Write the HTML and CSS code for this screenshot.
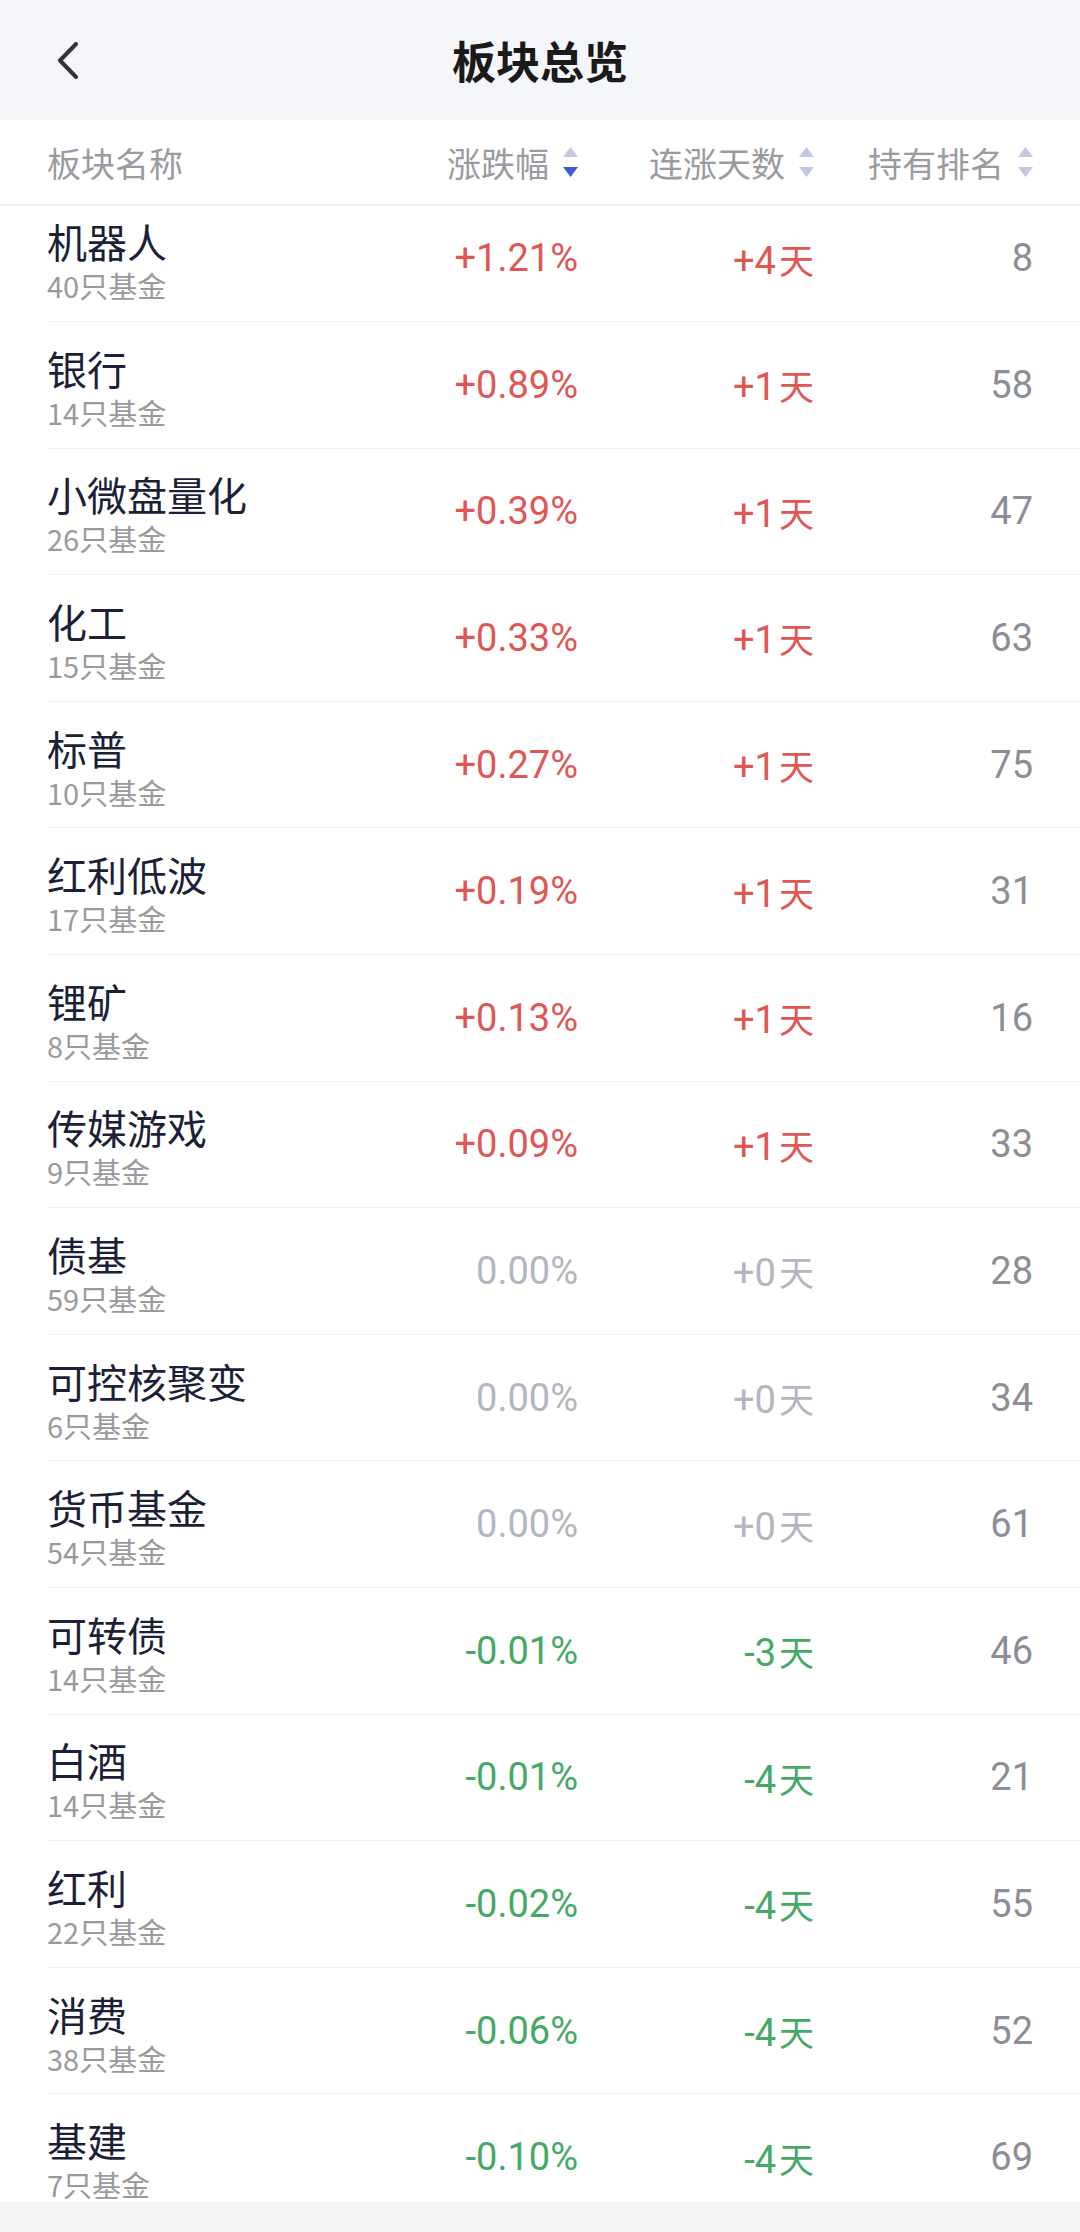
FILE: index.html
```html
<!DOCTYPE html>
<html lang="zh-CN">
<head>
  <meta charset="UTF-8" />
  <meta name="viewport" content="width=device-width, initial-scale=1.0">
  <title>板块总览</title>
<link rel="stylesheet" href="styles.css">
</head>
<body>
  <div class="page">
    <header class="topbar">
      <a class="back" href="#">
        <svg width="22" height="37" viewBox="0 0 22 37"><path d="M19 2 L3 18.5 L19 35" fill="none" stroke="#333" stroke-width="4" stroke-linecap="round" stroke-linejoin="round"/></svg>
      </a>
      <h1>板块总览</h1>
      <span></span>
    </header>

    <div class="colhead">
      <span class="col-name">板块名称</span>
      <span class="sort">涨跌幅
        <svg width="15" height="30" viewBox="0 0 15 30"><path d="M7.5 0 L15 10 L0 10 Z" fill="#c4c7e0"/><path d="M0 20 L15 20 L7.5 30 Z" fill="#3f5ad8"/></svg>
      </span>
      <span class="sort">连涨天数
        <svg width="15" height="30" viewBox="0 0 15 30"><path d="M7.5 0 L15 10 L0 10 Z" fill="#c4c7e0"/><path d="M0 20 L15 20 L7.5 30 Z" fill="#c4c7e0"/></svg>
      </span>
      <span class="sort">持有排名
        <svg width="15" height="30" viewBox="0 0 15 30"><path d="M7.5 0 L15 10 L0 10 Z" fill="#c4c7e0"/><path d="M0 20 L15 20 L7.5 30 Z" fill="#c4c7e0"/></svg>
      </span>
    </div>

    <div class="list">
      <div class="rows">
        <div class="row">
          <div class="name-cell"><div class="name">机器人</div><div class="count">40只基金</div></div>
          <div class="pct up">+1.21%</div>
          <div class="days up">+4<span class="unit">天</span></div>
          <div class="rank">8</div>
        </div>
        <div class="row">
          <div class="name-cell"><div class="name">银行</div><div class="count">14只基金</div></div>
          <div class="pct up">+0.89%</div>
          <div class="days up">+1<span class="unit">天</span></div>
          <div class="rank">58</div>
        </div>
        <div class="row">
          <div class="name-cell"><div class="name">小微盘量化</div><div class="count">26只基金</div></div>
          <div class="pct up">+0.39%</div>
          <div class="days up">+1<span class="unit">天</span></div>
          <div class="rank">47</div>
        </div>
        <div class="row">
          <div class="name-cell"><div class="name">化工</div><div class="count">15只基金</div></div>
          <div class="pct up">+0.33%</div>
          <div class="days up">+1<span class="unit">天</span></div>
          <div class="rank">63</div>
        </div>
        <div class="row">
          <div class="name-cell"><div class="name">标普</div><div class="count">10只基金</div></div>
          <div class="pct up">+0.27%</div>
          <div class="days up">+1<span class="unit">天</span></div>
          <div class="rank">75</div>
        </div>
        <div class="row">
          <div class="name-cell"><div class="name">红利低波</div><div class="count">17只基金</div></div>
          <div class="pct up">+0.19%</div>
          <div class="days up">+1<span class="unit">天</span></div>
          <div class="rank">31</div>
        </div>
        <div class="row">
          <div class="name-cell"><div class="name">锂矿</div><div class="count">8只基金</div></div>
          <div class="pct up">+0.13%</div>
          <div class="days up">+1<span class="unit">天</span></div>
          <div class="rank">16</div>
        </div>
        <div class="row">
          <div class="name-cell"><div class="name">传媒游戏</div><div class="count">9只基金</div></div>
          <div class="pct up">+0.09%</div>
          <div class="days up">+1<span class="unit">天</span></div>
          <div class="rank">33</div>
        </div>
        <div class="row">
          <div class="name-cell"><div class="name">债基</div><div class="count">59只基金</div></div>
          <div class="pct flat">0.00%</div>
          <div class="days flat">+0<span class="unit">天</span></div>
          <div class="rank">28</div>
        </div>
        <div class="row">
          <div class="name-cell"><div class="name">可控核聚变</div><div class="count">6只基金</div></div>
          <div class="pct flat">0.00%</div>
          <div class="days flat">+0<span class="unit">天</span></div>
          <div class="rank">34</div>
        </div>
        <div class="row">
          <div class="name-cell"><div class="name">货币基金</div><div class="count">54只基金</div></div>
          <div class="pct flat">0.00%</div>
          <div class="days flat">+0<span class="unit">天</span></div>
          <div class="rank">61</div>
        </div>
        <div class="row">
          <div class="name-cell"><div class="name">可转债</div><div class="count">14只基金</div></div>
          <div class="pct down">-0.01%</div>
          <div class="days down">-3<span class="unit">天</span></div>
          <div class="rank">46</div>
        </div>
        <div class="row">
          <div class="name-cell"><div class="name">白酒</div><div class="count">14只基金</div></div>
          <div class="pct down">-0.01%</div>
          <div class="days down">-4<span class="unit">天</span></div>
          <div class="rank">21</div>
        </div>
        <div class="row">
          <div class="name-cell"><div class="name">红利</div><div class="count">22只基金</div></div>
          <div class="pct down">-0.02%</div>
          <div class="days down">-4<span class="unit">天</span></div>
          <div class="rank">55</div>
        </div>
        <div class="row">
          <div class="name-cell"><div class="name">消费</div><div class="count">38只基金</div></div>
          <div class="pct down">-0.06%</div>
          <div class="days down">-4<span class="unit">天</span></div>
          <div class="rank">52</div>
        </div>
        <div class="row">
          <div class="name-cell"><div class="name">基建</div><div class="count">7只基金</div></div>
          <div class="pct down">-0.10%</div>
          <div class="days down">-4<span class="unit">天</span></div>
          <div class="rank">69</div>
        </div>
      </div>
    </div>

    <div class="bottom"></div>
  </div>
</body>
</html>
```

FILE: styles.css
```css
body {
  margin: 0;
  font-family: "Noto Sans CJK SC", "Noto Sans", sans-serif;
  background: #fff;
}

.page {
  width: 1080px;
  height: 2232px;
  display: flex;
  flex-direction: column;
  overflow: hidden;
}

.topbar {
  height: 120px;
  flex: none;
  background: #f5f6fa;
  display: grid;
  grid-template-columns: 1fr auto 1fr;
  align-items: center;
}

.back {
  display: flex;
  padding-left: 57px;
}

.topbar h1 {
  margin: 0;
  font-size: 44px;
  font-weight: 700;
  color: #1a1a1a;
  line-height: 1;
}

.colhead {
  height: 84px;
  flex: none;
  display: grid;
  grid-template-columns: 1fr 180px 236px 219px;
  align-items: center;
  padding: 0 47px;
  border-bottom: 2px solid #f0f0f2;
  font-size: 34px;
  color: #9a9ba0;
}

.sort {
  display: flex;
  justify-content: flex-end;
  align-items: center;
  gap: 14px;
}

.list {
  flex: 1;
  overflow: hidden;
}

.rows {
  margin-top: -10.6px;
}

.row {
  height: 126.6px;
  box-sizing: border-box;
  margin-left: 47px;
  padding-right: 47px;
  border-bottom: 1px solid #efeff1;
  display: grid;
  grid-template-columns: 1fr 180px 236px 219px;
  align-items: center;
}

.name-cell {
  padding-top: 6px;
}

.name {
  font-size: 40px;
  line-height: 48px;
  color: #1c1f38;
}

.count {
  font-size: 29px;
  line-height: 40px;
  color: #9a9a9e;
}

.pct,
.days,
.rank {
  text-align: right;
  font-family: Roboto, "Liberation Sans", sans-serif;
  font-size: 38px;
  font-weight: 400;
}

.unit {
  font-family: "Noto Sans CJK SC", sans-serif;
  font-size: 35px;
  margin-left: 3px;
}

.up {
  color: #e05654;
}

.down {
  color: #45a965;
}

.flat {
  color: #b3b6c2;
}

.rank {
  color: #8c8e97;
}

.bottom {
  height: 30px;
  flex: none;
  background: #f4f4f4;
}
```
